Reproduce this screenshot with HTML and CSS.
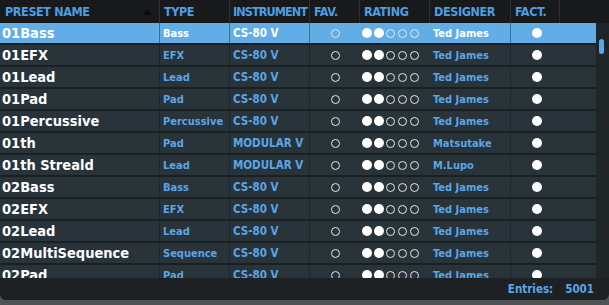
FILE: index.html
```html
<!DOCTYPE html>
<html>
  <head>
    <meta charset="UTF-8" />
    <title>Preset Browser</title>
    <link rel="stylesheet" href="styles.css">
  </head>
  <body>
    <div id="browser">
      <!-- Column headers -->
      <div class="head-row">
        <div class="hcell col-name">PRESET NAME<span class="sort-arrow"></span></div>
        <div class="hcell col-type">TYPE</div>
        <div class="hcell col-inst">INSTRUMENT</div>
        <div class="hcell col-fav">FAV.</div>
        <div class="hcell col-rating">RATING</div>
        <div class="hcell col-designer">DESIGNER</div>
        <div class="hcell col-fact">FACT.</div>
        <div class="hcell col-fill"></div>
      </div>

      <div id="list-area">
        <div id="rows">
          <div class="row selected">
            <div class="cell col-name">01Bass</div>
            <div class="cell col-type">Bass</div>
            <div class="cell col-inst">CS-80 V</div>
            <div class="cell col-fav"><span class="ring"></span></div>
            <div class="cell col-rating"><span class="dot"></span><span class="dot"></span><span class="ring"></span><span class="ring"></span><span class="ring"></span></div>
            <div class="cell col-designer">Ted James</div>
            <div class="cell col-fact"><span class="dot"></span></div>
          </div>
          <div class="row">
            <div class="cell col-name">01EFX</div>
            <div class="cell col-type">EFX</div>
            <div class="cell col-inst">CS-80 V</div>
            <div class="cell col-fav"><span class="ring"></span></div>
            <div class="cell col-rating"><span class="dot"></span><span class="dot"></span><span class="ring"></span><span class="ring"></span><span class="ring"></span></div>
            <div class="cell col-designer">Ted James</div>
            <div class="cell col-fact"><span class="dot"></span></div>
          </div>
          <div class="row">
            <div class="cell col-name">01Lead</div>
            <div class="cell col-type">Lead</div>
            <div class="cell col-inst">CS-80 V</div>
            <div class="cell col-fav"><span class="ring"></span></div>
            <div class="cell col-rating"><span class="dot"></span><span class="dot"></span><span class="ring"></span><span class="ring"></span><span class="ring"></span></div>
            <div class="cell col-designer">Ted James</div>
            <div class="cell col-fact"><span class="dot"></span></div>
          </div>
          <div class="row">
            <div class="cell col-name">01Pad</div>
            <div class="cell col-type">Pad</div>
            <div class="cell col-inst">CS-80 V</div>
            <div class="cell col-fav"><span class="ring"></span></div>
            <div class="cell col-rating"><span class="dot"></span><span class="dot"></span><span class="ring"></span><span class="ring"></span><span class="ring"></span></div>
            <div class="cell col-designer">Ted James</div>
            <div class="cell col-fact"><span class="dot"></span></div>
          </div>
          <div class="row">
            <div class="cell col-name">01Percussive</div>
            <div class="cell col-type">Percussive</div>
            <div class="cell col-inst">CS-80 V</div>
            <div class="cell col-fav"><span class="ring"></span></div>
            <div class="cell col-rating"><span class="dot"></span><span class="dot"></span><span class="ring"></span><span class="ring"></span><span class="ring"></span></div>
            <div class="cell col-designer">Ted James</div>
            <div class="cell col-fact"><span class="dot"></span></div>
          </div>
          <div class="row">
            <div class="cell col-name">01th</div>
            <div class="cell col-type">Pad</div>
            <div class="cell col-inst">MODULAR V</div>
            <div class="cell col-fav"><span class="ring"></span></div>
            <div class="cell col-rating"><span class="dot"></span><span class="dot"></span><span class="ring"></span><span class="ring"></span><span class="ring"></span></div>
            <div class="cell col-designer">Matsutake</div>
            <div class="cell col-fact"><span class="dot"></span></div>
          </div>
          <div class="row">
            <div class="cell col-name">01th Streald</div>
            <div class="cell col-type">Lead</div>
            <div class="cell col-inst">MODULAR V</div>
            <div class="cell col-fav"><span class="ring"></span></div>
            <div class="cell col-rating"><span class="dot"></span><span class="dot"></span><span class="ring"></span><span class="ring"></span><span class="ring"></span></div>
            <div class="cell col-designer">M.Lupo</div>
            <div class="cell col-fact"><span class="dot"></span></div>
          </div>
          <div class="row">
            <div class="cell col-name">02Bass</div>
            <div class="cell col-type">Bass</div>
            <div class="cell col-inst">CS-80 V</div>
            <div class="cell col-fav"><span class="ring"></span></div>
            <div class="cell col-rating"><span class="dot"></span><span class="dot"></span><span class="ring"></span><span class="ring"></span><span class="ring"></span></div>
            <div class="cell col-designer">Ted James</div>
            <div class="cell col-fact"><span class="dot"></span></div>
          </div>
          <div class="row">
            <div class="cell col-name">02EFX</div>
            <div class="cell col-type">EFX</div>
            <div class="cell col-inst">CS-80 V</div>
            <div class="cell col-fav"><span class="ring"></span></div>
            <div class="cell col-rating"><span class="dot"></span><span class="dot"></span><span class="ring"></span><span class="ring"></span><span class="ring"></span></div>
            <div class="cell col-designer">Ted James</div>
            <div class="cell col-fact"><span class="dot"></span></div>
          </div>
          <div class="row">
            <div class="cell col-name">02Lead</div>
            <div class="cell col-type">Lead</div>
            <div class="cell col-inst">CS-80 V</div>
            <div class="cell col-fav"><span class="ring"></span></div>
            <div class="cell col-rating"><span class="dot"></span><span class="dot"></span><span class="ring"></span><span class="ring"></span><span class="ring"></span></div>
            <div class="cell col-designer">Ted James</div>
            <div class="cell col-fact"><span class="dot"></span></div>
          </div>
          <div class="row">
            <div class="cell col-name">02MultiSequence</div>
            <div class="cell col-type">Sequence</div>
            <div class="cell col-inst">CS-80 V</div>
            <div class="cell col-fav"><span class="ring"></span></div>
            <div class="cell col-rating"><span class="dot"></span><span class="dot"></span><span class="ring"></span><span class="ring"></span><span class="ring"></span></div>
            <div class="cell col-designer">Ted James</div>
            <div class="cell col-fact"><span class="dot"></span></div>
          </div>
          <div class="row">
            <div class="cell col-name">02Pad</div>
            <div class="cell col-type">Pad</div>
            <div class="cell col-inst">CS-80 V</div>
            <div class="cell col-fav"><span class="ring"></span></div>
            <div class="cell col-rating"><span class="dot"></span><span class="dot"></span><span class="ring"></span><span class="ring"></span><span class="ring"></span></div>
            <div class="cell col-designer">Ted James</div>
            <div class="cell col-fact"><span class="dot"></span></div>
          </div>
        </div>

        <!-- Scroll bar -->
        <div id="scroll-track">
          <div class="scroll-thumb"></div>
        </div>
      </div>

      <div id="footer">
        <span class="entries-label">Entries:</span>
        <span class="entries-count">5001</span>
      </div>
    </div>
  </body>
</html>
```

FILE: styles.css
```css
body {
  margin: 0;
  padding: 0;
  background-color: #505355;
  font-family: 'DejaVu Sans Condensed', 'DejaVu Sans', sans-serif;
  font-weight: bold;
  overflow: hidden;
  width: 609px;
  height: 305px;
}

#browser {
  display: flex;
  flex-direction: column;
  height: 300px;
  background-color: #1e2123;
  border-radius: 0 0 6px 6px;
  overflow: hidden;
}

/* Header */
.head-row {
  display: flex;
  height: 23px;
  background-color: #17191b;
  flex-shrink: 0;
}

.hcell {
  box-sizing: border-box;
  display: flex;
  align-items: center;
  padding-left: 4px;
  font-size: 12.5px;
  letter-spacing: -0.4px;
  color: #4d9fe2;
  border-right: 1px solid #2c3034;
  white-space: nowrap;
}

.hcell.col-inst {
  letter-spacing: -0.9px;
  padding-left: 3px;
}

.hcell.col-fill {
  border-right: none;
  flex-grow: 1;
}

.col-name { width: 160px; }
.col-type { width: 70px; }
.col-inst { width: 80px; }
.col-fav { width: 50px; }
.col-rating { width: 70px; }
.col-designer { width: 81px; }
.col-fact { width: 49px; }

.hcell.col-name {
  padding-left: 5px;
  justify-content: space-between;
  padding-right: 8px;
}

.sort-arrow {
  width: 0;
  height: 0;
  border-left: 4px solid transparent;
  border-right: 4px solid transparent;
  border-bottom: 6px solid #0a0b0c;
}

/* List */
#list-area {
  display: flex;
  flex-grow: 1;
  overflow: hidden;
}

#rows {
  width: 596px;
  overflow: hidden;
}

.row {
  display: flex;
  height: 20px;
  background-color: #29333a;
  border-bottom: 2px solid #1a1f22;
  color: #5aa6e7;
}

.row.selected {
  background-color: #63ade6;
  color: #ffffff;
}

.cell {
  box-sizing: border-box;
  display: flex;
  align-items: center;
  padding-left: 3px;
  font-size: 11px;
  white-space: nowrap;
}

.cell.col-name {
  font-size: 14.5px;
  color: #ffffff;
  padding-left: 2px;
  border-right: 1px solid #1f262b;
}

.cell.col-type,
.cell.col-inst,
.cell.col-designer {
  border-right: 1px solid #1f262b;
}

.cell.col-inst {
  font-size: 11.5px;
}

.row.selected .cell {
  border-right-color: #3b6e93;
}

.cell.col-fav {
  justify-content: center;
  padding-left: 0;
}

.cell.col-rating {
  gap: 3px;
  padding-left: 2px;
}

.cell.col-fact {
  flex-grow: 1;
  padding-left: 21px;
}

.ring {
  box-sizing: border-box;
  width: 9px;
  height: 9px;
  border: 1.5px solid #e6e8ea;
  border-radius: 50%;
}

.dot {
  width: 10px;
  height: 10px;
  background-color: #ffffff;
  border-radius: 50%;
}

.col-rating .dot {
  margin-right: -1px;
}

/* Scroll bar */
#scroll-track {
  width: 13px;
  background-color: #202528;
}

.scroll-thumb {
  width: 5px;
  height: 15px;
  margin: 16px 0 0 3px;
  background-color: #5aa6e7;
  border-radius: 3px;
}

/* Footer */
#footer {
  height: 22px;
  flex-shrink: 0;
  display: flex;
  justify-content: flex-end;
  align-items: center;
  padding-right: 15px;
  gap: 12px;
  font-size: 11.5px;
  color: #5aa6e7;
}
```
